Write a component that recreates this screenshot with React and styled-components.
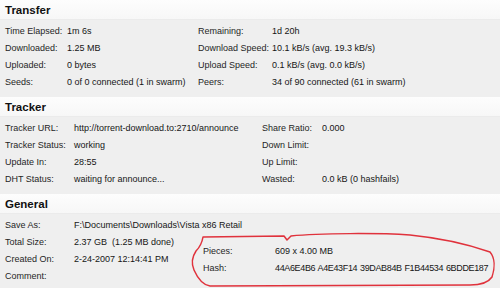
import React from "react";
import styled, { createGlobalStyle } from "styled-components";

const Global = createGlobalStyle`
  html, body { margin: 0; padding: 0; background: #efefef; }
  body { font-family: "Liberation Sans", Arial, sans-serif; }
`;

const Page = styled.div`
  position: relative;
  width: 500px;
  height: 288px;
  overflow: hidden;
  background: #efefef;
  color: #1c1c1c;
`;

const Section = styled.section`
  display: flex;
  flex-direction: column;
  padding-bottom: 7px;
`;

const Header = styled.div`
  height: 20px;
  display: flex;
  align-items: center;
  padding-left: 5px;
  margin-bottom: 2px;
  background: linear-gradient(#fdfdfd, #f7f7f7);
  border-bottom: 1px solid #ebebeb;
  box-sizing: border-box;
  font-size: 11.5px;
  font-weight: bold;
  color: #111;
`;

const Body = styled.div`
  display: flex;
  padding-left: 5px;
`;

const Group = styled.div`
  display: grid;
  grid-template-columns: ${(p) => p.$label}px 1fr;
  grid-auto-rows: 17px;
  width: ${(p) => (p.$width ? `${p.$width}px` : "auto")};
  flex: ${(p) => (p.$width ? "none" : "1")};
  padding-top: ${(p) => p.$offset || 0}px;
  font-size: 9px;
  align-items: center;
  white-space: nowrap;
`;

const Label = styled.span`
  color: #262626;
`;

const Value = styled.span`
  color: #161616;
  letter-spacing: ${(p) => (p.$tight ? "-0.35px" : "normal")};
  word-spacing: ${(p) => (p.$tight ? "0.6px" : "normal")};
`;

const Annotation = styled.svg`
  position: absolute;
  left: 0;
  top: 0;
  pointer-events: none;
`;

const Pairs = ({ rows, ...rest }) => (
  <Group {...rest}>
    {rows.map(([l, v, tight], i) => (
      <React.Fragment key={i}>
        <Label>{l}</Label>
        <Value $tight={tight}>{v}</Value>
      </React.Fragment>
    ))}
  </Group>
);

export default function App() {
  return (
    <Page>
      <Global />
      <Section>
        <Header>Transfer</Header>
        <Body>
          <Pairs
            $width={193}
            $label={62}
            rows={[
              ["Time Elapsed:", "1m 6s"],
              ["Downloaded:", "1.25 MB"],
              ["Uploaded:", "0 bytes"],
              ["Seeds:", "0 of 0 connected (1 in swarm)"],
            ]}
          />
          <Pairs
            $label={74}
            rows={[
              ["Remaining:", "1d 20h"],
              ["Download Speed:", "10.1 kB/s (avg. 19.3 kB/s)"],
              ["Upload Speed:", "0.1 kB/s (avg. 0.0 kB/s)"],
              ["Peers:", "34 of 90 connected (61 in swarm)"],
            ]}
          />
        </Body>
      </Section>
      <Section>
        <Header>Tracker</Header>
        <Body>
          <Pairs
            $width={257}
            $label={69}
            rows={[
              ["Tracker URL:", "http://torrent-download.to:2710/announce"],
              ["Tracker Status:", "working"],
              ["Update In:", "28:55"],
              ["DHT Status:", "waiting for announce..."],
            ]}
          />
          <Pairs
            $label={60}
            rows={[
              ["Share Ratio:", "0.000"],
              ["Down Limit:", ""],
              ["Up Limit:", ""],
              ["Wasted:", "0.0 kB (0 hashfails)"],
            ]}
          />
        </Body>
      </Section>
      <Section>
        <Header>General</Header>
        <Body>
          <Pairs
            $width={198}
            $label={69}
            rows={[
              ["Save As:", "F:\\Documents\\Downloads\\Vista x86 Retail"],
              ["Total Size:", "2.37 GB\u00a0 (1.25 MB done)"],
              ["Created On:", "2-24-2007 12:14:41 PM"],
              ["Comment:", ""],
            ]}
          />
          <Pairs
            $label={72}
            $offset={26}
            rows={[
              ["Pieces:", "609 x 4.00 MB"],
              ["Hash:", "44A6E4B6 A4E43F14 39DAB84B F1B44534 6BDDE187", true],
            ]}
          />
        </Body>
      </Section>
      <Annotation width="500" height="288" viewBox="0 0 500 288">
        <path
          d="M203,237 L284,236 L287,240 L291,236 C320,233 380,233 410,235 C440,238 470,245 490,252 C495,258 495,268 492,277 C488,283 480,285 470,285 L210,286 C203,285 198,279 194,270 C191,263 192,257 196,251 C200,247 202,243 203,237 Z"
          fill="none"
          stroke="#e0323c"
          strokeWidth="1.5"
          strokeLinejoin="round"
        />
      </Annotation>
    </Page>
  );
}
